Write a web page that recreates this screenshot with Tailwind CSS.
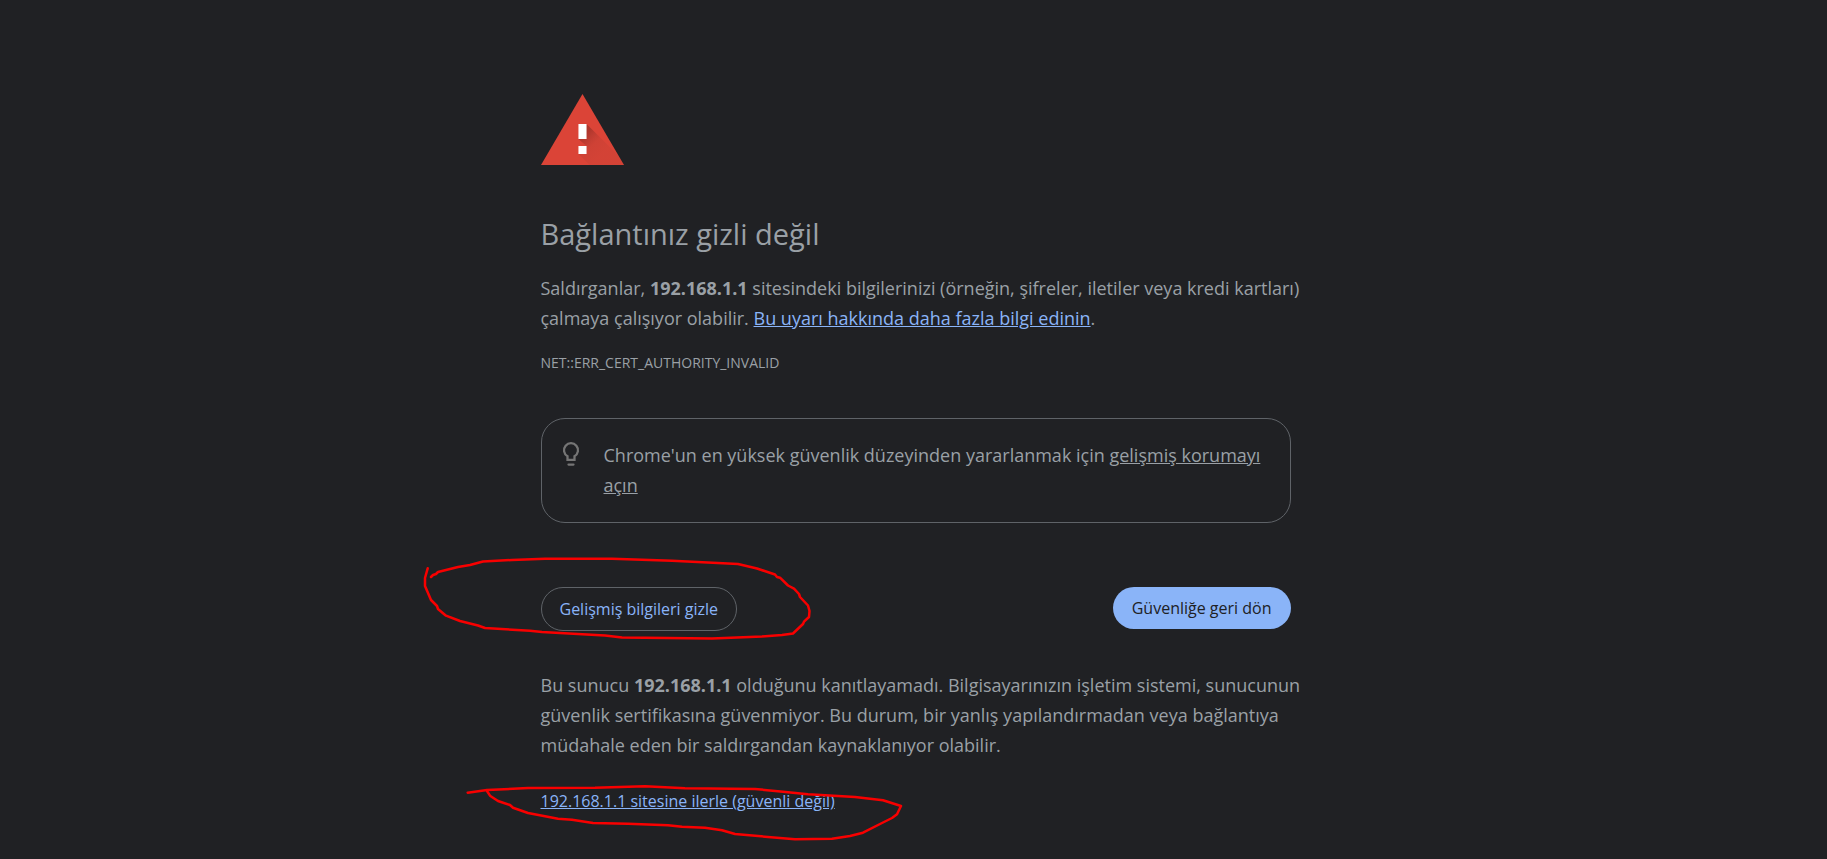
<!DOCTYPE html>
<html lang="tr">
<head>
<meta charset="utf-8">
<meta name="viewport" content="width=device-width, initial-scale=1">
<title>Gizlilik hatası</title>
<script src="https://cdn.jsdelivr.net/npm/@tailwindcss/browser@4"></script>
</head>
<body class="min-h-screen bg-[#202124] pl-1 font-['Open_Sans','Noto_Sans',sans-serif] text-lg leading-[30px] text-[#9aa0a6]">
<main class="relative mx-auto max-w-[750px] pt-[94px]">
  <svg class="block h-[71px] w-[83px]" viewBox="0 0 82 71" preserveAspectRatio="none" role="img" aria-label="Uyarı">
    <defs>
      <linearGradient id="shade" gradientUnits="userSpaceOnUse" x1="42" y1="42" x2="60" y2="60">
        <stop offset="0" stop-color="#000" stop-opacity=".2"/>
        <stop offset=".5" stop-color="#3e2723" stop-opacity=".08"/>
        <stop offset="1" stop-color="#3e2723" stop-opacity=".05"/>
      </linearGradient>
      <clipPath id="tri"><path d="M0 71 41 0 82 71z"/></clipPath>
    </defs>
    <path d="M0 71 41 0 82 71z" fill="#db4437"/>
    <path clip-path="url(#tri)" d="M45 30 86 71H48L37 60 45 52 37 45z" fill="url(#shade)"/>
    <path d="M37 30h8v15h-8zM37 52h8v8h-8z" fill="#fff"/>
  </svg>
  <h1 class="mt-[51px] text-[29px] leading-9">Bağlantınız gizli değil</h1>
  <p class="-mr-5 mt-[21px]">Saldırganlar, <strong>192.168.1.1</strong> sitesindeki bilgilerinizi (örneğin, şifreler, iletiler veya kredi kartları) çalmaya çalışıyor olabilir. <a href="#" class="text-[#8ab4f8] underline">Bu uyarı hakkında daha fazla bilgi edinin</a>.</p>
  <p class="mt-[18px] text-sm leading-6">NET::ERR_CERT_AUTHORITY_INVALID</p>
  <section class="mt-[43px] flex rounded-[24px] border border-[#5f6368] pb-[22px] pl-[18px] pr-5 pt-[21px]">
    <svg class="h-[30px] w-6 shrink-0" viewBox="0 0 24 30" fill="none" stroke="#757575" stroke-width="2.300" aria-hidden="true">
      <path d="M7.500 19.800V16.200A7 7 0 1 1 14.500 16.200V19.800z"/>
      <path d="M8.500 24.600h5" stroke-linecap="round"/>
    </svg>
    <p class="ml-5">Chrome'un en yüksek güvenlik düzeyinden yararlanmak için <a href="#" class="underline">gelişmiş korumayı açın</a></p>
  </section>
  <div class="mt-16 flex items-start justify-between text-base leading-5">
    <button type="button" class="rounded-full border border-[#5f6368] px-[18px] py-[11px] text-[#8ab4f8]">Gelişmiş bilgileri gizle</button>
    <button type="button" class="rounded-full bg-[#8ab4f8] px-[19px] py-[11px] text-[#202124]">Güvenliğe geri dön</button>
  </div>
  <p class="-mr-5 mt-[39px]">Bu sunucu <strong>192.168.1.1</strong> olduğunu kanıtlayamadı. Bilgisayarınızın işletim sistemi, sunucunun güvenlik sertifikasına güvenmiyor. Bu durum, bir yanlış yapılandırmadan veya bağlantıya müdahale eden bir saldırgandan kaynaklanıyor olabilir.</p>
  <p class="mt-[29px] text-base leading-6"><a href="#" class="text-[#8ab4f8] underline">192.168.1.1 sitesine ilerle (güvenli değil)</a></p>

  <!-- Hand-drawn marks over the two actions -->
  <svg class="pointer-events-none absolute -left-[121px] top-[550px] h-[300px] w-[500px]" viewBox="420 550 500 300" fill="none" stroke="#f80000" stroke-width="2.500" stroke-linecap="round" stroke-linejoin="round" aria-hidden="true">
    <path d="M431 577 433 575 436 574 438 572 458 567 470 565 483 561.500 512 560 545 558.700H612L672 560.700 738 564 757 568.500 775 574.500 777 577 780 577.700 788 585.500 794 588.700 799 594 800 597 808 605.500 809.500 611 809 617 804 621.700 803 624 793 633.500 782 635 762 636.500 712 638.500 622 637.500 605 635.500 542 632 530 630.700 485 628 478 625.500 460 621 446 615.700 438 609 437 606 431 600 425 586V578L427.700 568.300"/>
    <path d="M467.700 792.700 487 790 528 788 595 787.700 645 786.300 685 788.300 755 789 783 791.700 808 794.300 855 797 883 800.300 901 806 897 814.300 892 818 882 823 863 832.700 850 836 832 838.700 795 839.300 735 834 722 830.300 705 827.700 682 826.700 668 825.300 628 823.700 593 823 572 819.700 558 818.700 528 813 513 807.700 510 805 498 801 490 795.700 487 791"/>
  </svg>
</main>
</body>
</html>
